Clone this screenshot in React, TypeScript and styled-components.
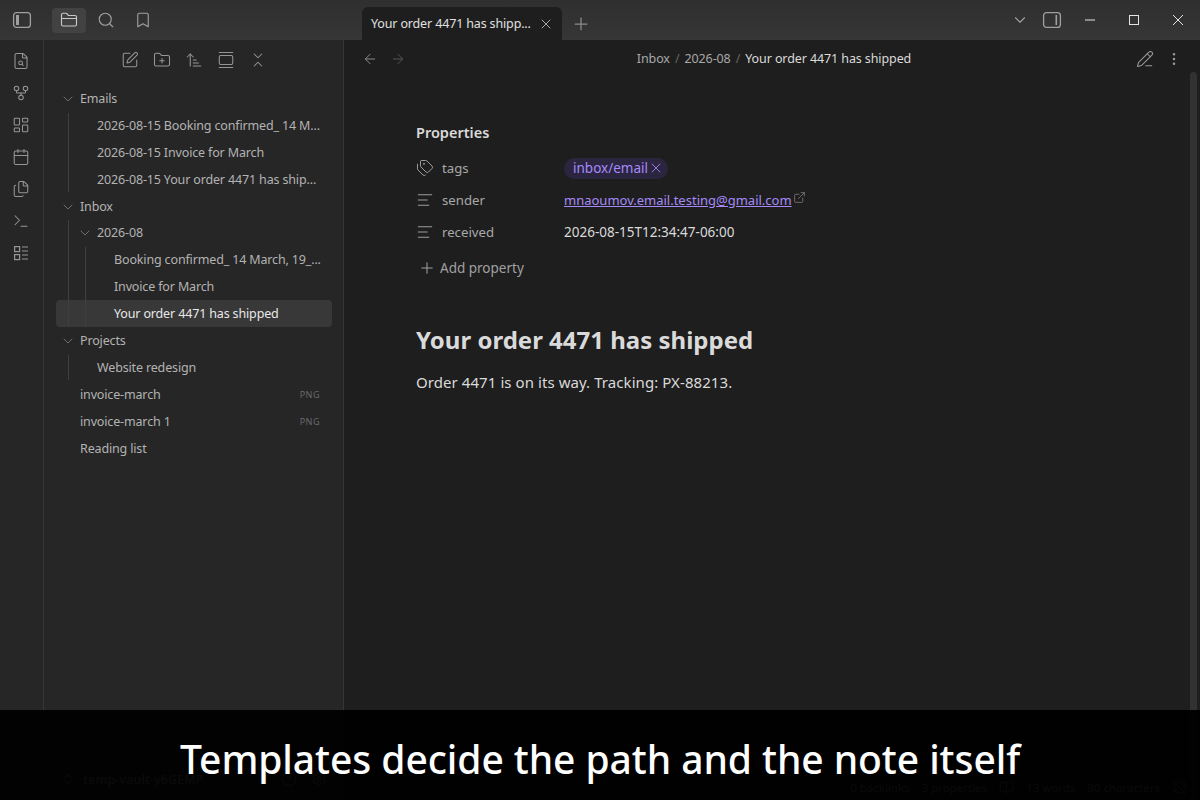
import styled, { createGlobalStyle } from 'styled-components';
import {
  ArrowLeft,
  ArrowRight,
  ArrowUpNarrowWide,
  AlignLeft,
  Bookmark,
  BookOpen,
  Calendar,
  ChevronDown,
  ChevronsDownUp,
  ChevronsUpDown,
  CircleHelp,
  EllipsisVertical,
  ExternalLink,
  FileSearch,
  Files,
  FolderClosed,
  FolderPlus,
  GalleryVertical,
  GitFork,
  LayoutDashboard,
  PencilLine,
  Plus,
  RefreshCwOff,
  Search,
  Settings,
  SquarePen,
  Tags,
  Terminal,
  X,
} from 'lucide-react';

const FONT = `"Noto Sans", "Open Sans", "Liberation Sans", sans-serif`;

const GlobalStyle = createGlobalStyle`
  html, body {
    margin: 0;
    height: 100%;
    background: #1e1e1e;
  }
  * {
    box-sizing: border-box;
  }
  #root {
    height: 100%;
  }
`;

const Page = styled.div`
  position: relative;
  width: 1200px;
  height: 800px;
  overflow: hidden;
  display: flex;
  flex-direction: column;
  font-family: ${FONT};
  color: #dadada;
`;

const TitleBar = styled.header`
  flex: none;
  height: 40px;
  display: flex;
  align-items: flex-end;
  background: linear-gradient(#2f2f2f, #363636);
`;

const TitleLeft = styled.div`
  width: 344px;
  height: 40px;
  flex: none;
  display: flex;
  align-items: center;
  padding-left: 12px;
`;

const PanelToggle = styled.button`
  width: 20px;
  height: 25px;
  margin-right: 20px;
  border: 0;
  padding: 0;
  display: flex;
  align-items: center;
  justify-content: center;
  color: #a0a0a0;
  background: transparent;
`;

const TitleIcon = styled.button<{ $active?: boolean }>`
  width: 34px;
  height: 25px;
  margin-right: 3px;
  border: 0;
  padding: 0;
  border-radius: 4px;
  display: flex;
  align-items: center;
  justify-content: center;
  color: ${(p) => (p.$active ? '#c8c8c8' : '#a0a0a0')};
  background: ${(p) => (p.$active ? '#424242' : 'transparent')};
`;

const Tab = styled.div`
  width: 200px;
  height: 33px;
  margin-left: 18px;
  padding: 0 8px 0 9px;
  display: flex;
  align-items: center;
  justify-content: space-between;
  background: #1e1e1e;
  border-radius: 6px 6px 0 0;
  font-size: 12.5px;
  letter-spacing: -0.15px;
  white-space: nowrap;
  color: #e0e0e0;
  svg {
    color: #a8a8a8;
  }
`;

const TabPlus = styled.div`
  width: 20px;
  margin-left: 9px;
  height: 33px;
  display: flex;
  align-items: center;
  color: #8c8c8c;
`;

const WindowControls = styled.div`
  margin-left: auto;
  height: 40px;
  display: flex;
  align-items: center;
  color: #9a9a9a;
`;

const WindowButton = styled.div<{ $w: number }>`
  width: ${(p) => p.$w}px;
  height: 40px;
  display: flex;
  align-items: center;
  justify-content: center;
  color: ${(p) => (p.$w > 40 ? '#e4e4e4' : '#a0a0a0')};
`;

const Body = styled.div`
  flex: 1;
  min-height: 0;
  display: flex;
`;

const Ribbon = styled.nav`
  width: 44px;
  flex: none;
  background: #262626;
  border-right: 1px solid #363636;
  display: flex;
  flex-direction: column;
  align-items: center;
  padding: 10px 1px 0 0;
  gap: 10px;
  color: #969696;
`;

const RibbonItem = styled.div`
  width: 22px;
  height: 22px;
  display: flex;
  align-items: center;
  justify-content: center;
`;

const Sidebar = styled.aside`
  width: 300px;
  flex: none;
  display: flex;
  flex-direction: column;
  background: #262626;
  border-right: 1px solid #363636;
`;

const SideToolbar = styled.div`
  height: 45px;
  flex: none;
  display: flex;
  justify-content: center;
  align-items: flex-start;
  gap: 10px;
  padding-top: 9px;
  color: #969696;
`;

const ToolIcon = styled.div`
  width: 22px;
  height: 22px;
  display: flex;
  align-items: center;
  justify-content: center;
`;

const Tree = styled.div`
  flex: 1;
  padding: 0 11px 0 12px;
`;

const Row = styled.div<{ $depth: number; $selected?: boolean }>`
  height: 26.9px;
  display: flex;
  align-items: center;
  padding-left: ${(p) => 24 + p.$depth * 17}px;
  padding-right: 12px;
  border-radius: 4px;
  position: relative;
  font-size: 12.5px;
  letter-spacing: -0.15px;
  white-space: nowrap;
  color: ${(p) => (p.$selected ? '#e8e8e8' : '#b3b3b3')};
  background: ${(p) => (p.$selected ? '#383838' : 'transparent')};
`;

const Chevron = styled(ChevronDown)<{ $depth: number }>`
  position: absolute;
  left: ${(p) => 4 + p.$depth * 17}px;
  top: 6px;
  color: #6e6e6e;
`;

const Children = styled.div<{ $depth: number }>`
  position: relative;
  &::before {
    content: '';
    position: absolute;
    z-index: 1;
    left: ${(p) => 12 + p.$depth * 17}px;
    top: 1px;
    bottom: 1px;
    width: 1px;
    background: #3f3f3f;
  }
`;

const Badge = styled.span`
  margin-left: auto;
  font-size: 9px;
  letter-spacing: 0.5px;
  color: #6a6a6a;
`;

const VaultBar = styled.div`
  height: 42px;
  flex: none;
  display: flex;
  align-items: center;
  padding: 0 0 0 17px;
  font-size: 12.5px;
  font-weight: 600;
  color: #b3b3b3;
  svg {
    color: #a0a0a0;
  }
`;

const VaultName = styled.span`
  margin-left: 8px;
  width: 198px;
`;

const VaultIcons = styled.div`
  display: flex;
  gap: 14px;
`;

const Main = styled.main`
  flex: 1;
  min-width: 0;
  display: flex;
  flex-direction: column;
  background: #1e1e1e;
  position: relative;
`;

const NavBar = styled.div`
  height: 37px;
  flex: none;
  display: flex;
  align-items: center;
  padding: 0 18px 0 18px;
  gap: 12px;
`;

const Crumbs = styled.div`
  flex: 1;
  display: flex;
  justify-content: center;
  gap: 5px;
  padding-left: 6px;
  font-size: 12.5px;
  letter-spacing: -0.1px;
  color: #a8a8a8;
`;

const CrumbSep = styled.span`
  color: #666;
`;

const CrumbCurrent = styled.span`
  color: #dadada;
`;

const NavIcon = styled.div<{ $color: string }>`
  display: flex;
  color: ${(p) => p.$color};
`;

const NavRight = styled.div`
  display: flex;
  align-items: center;
  gap: 12px;
`;

const Content = styled.div`
  flex: 1;
  padding: 45px 0 0 72px;
`;

const PropertiesTitle = styled.div`
  font-size: 14.5px;
  font-weight: 600;
  color: #dadada;
  height: 20px;
  line-height: 20px;
  margin-bottom: 10px;
`;

const PropRow = styled.div`
  height: 32px;
  display: flex;
  align-items: center;
  font-size: 13.5px;
`;

const PropKey = styled.div`
  width: 148px;
  flex: none;
  display: flex;
  align-items: center;
  gap: 8px;
  color: #a8a8a8;
  font-size: 13.2px;
  svg {
    color: #a0a0a0;
  }
`;

const TagPill = styled.span`
  height: 21px;
  padding: 0 4px 0 9px;
  border-radius: 11px;
  display: inline-flex;
  align-items: center;
  background: #2b2540;
  color: #a68af9;
`;

const MailLink = styled.a`
  display: inline-flex;
  align-items: flex-start;
  font-size: 13px;
  color: #a68af9;
  text-decoration: underline;
  svg {
    color: #8a8a8a;
    margin: 0 0 0 1px;
  }
`;

const PropValue = styled.span`
  color: #dadada;
`;

const AddProperty = styled.div`
  height: 32px;
  margin-top: 4px;
  display: flex;
  align-items: center;
  gap: 4px;
  padding-left: 2px;
  font-size: 13.5px;
  color: #a0a0a0;
`;

const NoteTitle = styled.h1`
  margin: 40px 0 0;
  font-size: 24px;
  line-height: 32px;
  font-weight: 700;
  color: #dadada;
`;

const Paragraph = styled.p`
  margin: 15px 0 0;
  font-size: 15px;
  letter-spacing: 0.07px;
  line-height: 22px;
  color: #dadada;
`;

const Scrollbar = styled.div`
  position: absolute;
  right: 3px;
  top: 32px;
  bottom: 0;
  width: 7px;
  border-radius: 4px 4px 0 0;
  background: #323232;
`;

const StatusBar = styled.div`
  position: absolute;
  right: 13px;
  bottom: 0;
  height: 26px;
  display: flex;
  align-items: center;
  gap: 12px;
  font-size: 11.5px;
  color: #a8a8a8;
`;

const Caption = styled.div`
  position: absolute;
  left: 0;
  right: 0;
  bottom: 0;
  height: 90px;
  display: flex;
  align-items: center;
  justify-content: center;
  background: rgba(0, 0, 0, 0.95);
  color: #ffffff;
  font-size: 39px;
  letter-spacing: -0.06px;
  font-weight: 500;
  padding-top: 6px;
`;

// obsidian draws these two with a filled pane, lucide's panel icons are too square
function PanelIcon({ side }: { side: 'left' | 'right' }) {
  return (
    <svg width="20" height="18" viewBox="0 0 20 18" fill="none" stroke="currentColor" strokeWidth="1.3">
      <rect x="1.6" y="1.6" width="16.8" height="14.8" rx="3" />
      {side === 'left' ? (
        <rect x="4" y="4" width="3" height="10" fill="currentColor" stroke="none" />
      ) : (
        <rect x="13.5" y="4" width="1.6" height="10" fill="currentColor" stroke="none" />
      )}
    </svg>
  );
}

function BasesIcon() {
  return (
    <svg width="18" height="18" viewBox="0 0 18 18" fill="none" stroke="currentColor" strokeWidth="1.2">
      <rect x="2.6" y="2.6" width="5" height="5" />
      <rect x="2.6" y="10.6" width="5" height="5" />
      <path d="M10 3h6M10 7h6M10 11h6M10 15h6" />
    </svg>
  );
}

function Minimize() {
  return (
    <svg width="12" height="12" viewBox="0 0 12 12" stroke="currentColor" strokeWidth="1">
      <path d="M1 6h10" />
    </svg>
  );
}

function Maximize() {
  return (
    <svg width="12" height="12" viewBox="0 0 12 12" fill="none" stroke="currentColor" strokeWidth="1">
      <rect x="1.5" y="1.5" width="9" height="9" />
    </svg>
  );
}

function CloseWin() {
  return (
    <svg width="12" height="12" viewBox="0 0 12 12" stroke="currentColor" strokeWidth="1">
      <path d="M1 1l10 10M11 1L1 11" />
    </svg>
  );
}

const ribbonIcons = [FileSearch, GitFork, LayoutDashboard, Calendar, Files, Terminal];
const toolIcons = [SquarePen, FolderPlus, ArrowUpNarrowWide, GalleryVertical, ChevronsDownUp];

export default function App() {
  return (
    <>
      <GlobalStyle />
      <Page>
        <TitleBar>
          <TitleLeft>
            <PanelToggle>
              <PanelIcon side="left" />
            </PanelToggle>
            <TitleIcon $active>
              <FolderClosed size={18} strokeWidth={1.5} />
            </TitleIcon>
            <TitleIcon>
              <Search size={18} strokeWidth={1.5} />
            </TitleIcon>
            <TitleIcon>
              <Bookmark size={18} strokeWidth={1.5} />
            </TitleIcon>
          </TitleLeft>
          <Tab>
            <span>Your order 4471 has shipp...</span>
            <X size={16} strokeWidth={1.5} />
          </Tab>
          <TabPlus>
            <Plus size={20} strokeWidth={1.5} />
          </TabPlus>
          <WindowControls>
            <WindowButton $w={32}>
              <ChevronDown size={18} strokeWidth={1.5} />
            </WindowButton>
            <WindowButton $w={32}>
              <PanelIcon side="right" />
            </WindowButton>
            <WindowButton $w={44}>
              <Minimize />
            </WindowButton>
            <WindowButton $w={44}>
              <Maximize />
            </WindowButton>
            <WindowButton $w={44}>
              <CloseWin />
            </WindowButton>
          </WindowControls>
        </TitleBar>
        <Body>
          <Ribbon>
            {ribbonIcons.map((Icon, i) => (
              <RibbonItem key={i}>
                <Icon size={18} strokeWidth={1.4} />
              </RibbonItem>
            ))}
            <RibbonItem>
              <BasesIcon />
            </RibbonItem>
          </Ribbon>
          <Sidebar>
            <SideToolbar>
              {toolIcons.map((Icon, i) => (
                <ToolIcon key={i}>
                  <Icon size={18} strokeWidth={1.4} />
                </ToolIcon>
              ))}
            </SideToolbar>
            <Tree>
              <Row $depth={0}>
                <Chevron $depth={0} size={16} strokeWidth={1.5} />
                Emails
              </Row>
              <Children $depth={0}>
                <Row $depth={1}>2026-08-15 Booking confirmed_ 14 M...</Row>
                <Row $depth={1}>2026-08-15 Invoice for March</Row>
                <Row $depth={1}>2026-08-15 Your order 4471 has ship...</Row>
              </Children>
              <Row $depth={0}>
                <Chevron $depth={0} size={16} strokeWidth={1.5} />
                Inbox
              </Row>
              <Children $depth={0}>
                <Row $depth={1}>
                  <Chevron $depth={1} size={16} strokeWidth={1.5} />
                  2026-08
                </Row>
                <Children $depth={1}>
                  <Row $depth={2}>Booking confirmed_ 14 March, 19_...</Row>
                  <Row $depth={2}>Invoice for March</Row>
                  <Row $depth={2} $selected>
                    Your order 4471 has shipped
                  </Row>
                </Children>
              </Children>
              <Row $depth={0}>
                <Chevron $depth={0} size={16} strokeWidth={1.5} />
                Projects
              </Row>
              <Children $depth={0}>
                <Row $depth={1}>Website redesign</Row>
              </Children>
              <Row $depth={0}>
                invoice-march<Badge>PNG</Badge>
              </Row>
              <Row $depth={0}>
                invoice-march 1<Badge>PNG</Badge>
              </Row>
              <Row $depth={0}>Reading list</Row>
            </Tree>
            <VaultBar>
              <ChevronsUpDown size={14} />
              <VaultName>temp-vault-y6GEMP</VaultName>
              <VaultIcons>
                <CircleHelp size={16} />
                <Settings size={16} />
              </VaultIcons>
            </VaultBar>
          </Sidebar>
          <Main>
            <NavBar>
              <NavIcon $color="#8a8a8a">
                <ArrowLeft size={16} strokeWidth={1.5} />
              </NavIcon>
              <NavIcon $color="#555555">
                <ArrowRight size={16} strokeWidth={1.5} />
              </NavIcon>
              <Crumbs>
                <span>Inbox</span>
                <CrumbSep>/</CrumbSep>
                <span>2026-08</span>
                <CrumbSep>/</CrumbSep>
                <CrumbCurrent>Your order 4471 has shipped</CrumbCurrent>
              </Crumbs>
              <NavRight>
                <NavIcon $color="#9a9a9a">
                  <PencilLine size={18} strokeWidth={1.4} />
                </NavIcon>
                <NavIcon $color="#9a9a9a">
                  <EllipsisVertical size={16} strokeWidth={1.8} />
                </NavIcon>
              </NavRight>
            </NavBar>
            <Content>
              <PropertiesTitle>Properties</PropertiesTitle>
              <PropRow>
                <PropKey>
                  <Tags size={18} strokeWidth={1.3} />
                  tags
                </PropKey>
                <TagPill>
                  inbox/email
                  <X size={16} strokeWidth={1.3} />
                </TagPill>
              </PropRow>
              <PropRow>
                <PropKey>
                  <AlignLeft size={18} strokeWidth={1.3} />
                  sender
                </PropKey>
                <MailLink>
                  mnaoumov.email.testing@gmail.com
                  <ExternalLink size={13} strokeWidth={1.3} />
                </MailLink>
              </PropRow>
              <PropRow>
                <PropKey>
                  <AlignLeft size={18} strokeWidth={1.3} />
                  received
                </PropKey>
                <PropValue>2026-08-15T12:34:47-06:00</PropValue>
              </PropRow>
              <AddProperty>
                <Plus size={18} strokeWidth={1.4} />
                Add property
              </AddProperty>
              <NoteTitle>Your order 4471 has shipped</NoteTitle>
              <Paragraph>Order 4471 is on its way. Tracking: PX-88213.</Paragraph>
            </Content>
            <Scrollbar />
            <StatusBar>
              <span>0 backlinks</span>
              <span>3 properties</span>
              <BookOpen size={15} strokeWidth={1.3} />
              <span>13 words</span>
              <span>80 characters</span>
              <RefreshCwOff size={15} strokeWidth={1.3} />
            </StatusBar>
          </Main>
        </Body>
        <Caption>Templates decide the path and the note itself</Caption>
      </Page>
    </>
  );
}
